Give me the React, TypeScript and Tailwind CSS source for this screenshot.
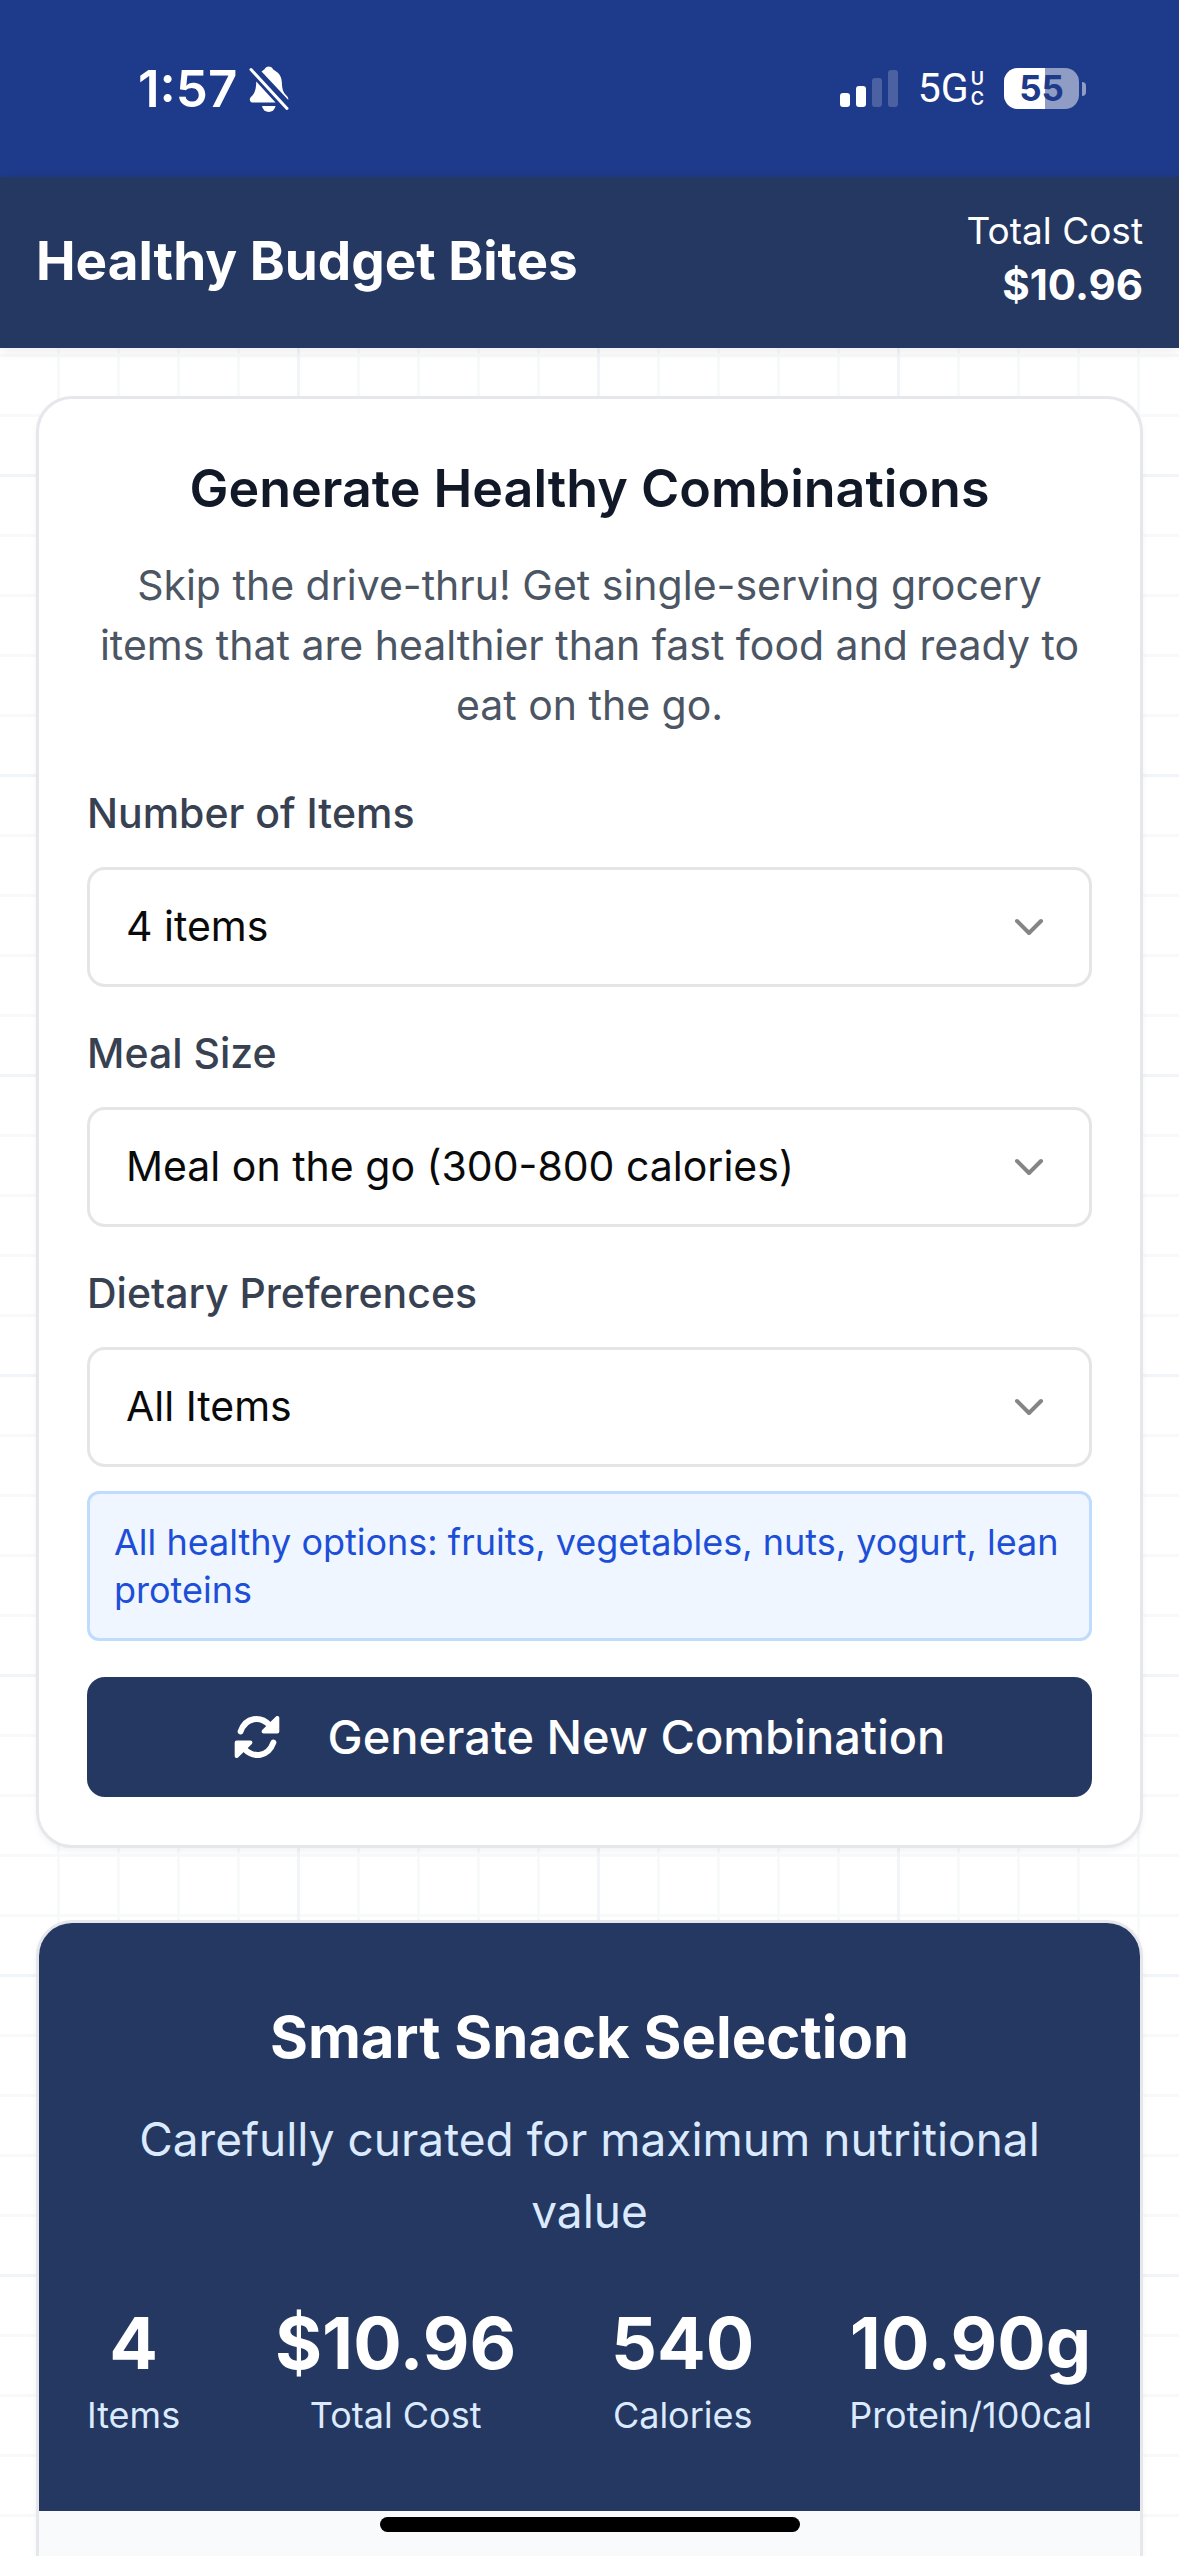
import { useState } from "react";
import { ChevronDown } from "lucide-react";

const FIELDS = [
  {
    id: "item-count",
    label: "Number of Items",
    initial: "4 items",
    options: ["2 items", "3 items", "4 items", "5 items"],
  },
  {
    id: "meal-size",
    label: "Meal Size",
    initial: "Meal on the go (300-800 calories)",
    options: ["Meal on the go (300-800 calories)"],
  },
  {
    id: "diet",
    label: "Dietary Preferences",
    initial: "All Items",
    options: ["All Items"],
  },
];

const STATS = [
  { value: "4", label: "Items" },
  { value: "$10.96", label: "Total Cost" },
  { value: "540", label: "Calories" },
  { value: "10.90g", label: "Protein/100cal" },
];

function BellOffIcon() {
  return (
    <svg viewBox="0 0 40 48" className="h-12 w-10" fill="currentColor" aria-hidden="true">
      <path d="M12.5 6.5C14.5 4.8 15.5 4.8 16 3.6a4.4 4.4 0 0 1 7.6 0c.5 1.3 1.3 1.5 2.8 2.5C30.5 8.5 32.8 12.5 32.9 18c.2 6 1.3 9.5 4.5 12.5 1.4 1.3 2 2.6 1.9 4.5z" />
      <path d="M7.3 16.5 26.5 37.5H3.3C.9 37.5-.2 34 1.9 32c3.8-3.6 5.1-7 5.4-15.5z" />
      <path d="M13 41h13.5a6.8 6.8 0 0 1-13.5 0z" />
      <path d="M2 4.5 38 43.5" stroke="currentColor" strokeWidth="3" strokeLinecap="round" />
    </svg>
  );
}

function RefreshIcon() {
  return (
    <svg viewBox="0 0 136 128" className="h-[42px] w-[46px]" stroke="currentColor" aria-hidden="true">
      <path d="M18 47C34 3 78-2 108 29" fill="none" strokeWidth="18" strokeLinecap="round" />
      <path d="M130 6v41H88z" fill="currentColor" strokeWidth="12" strokeLinejoin="round" />
      <path d="M118 81C102 125 58 130 28 99" fill="none" strokeWidth="18" strokeLinecap="round" />
      <path d="M6 122V81h42z" fill="currentColor" strokeWidth="12" strokeLinejoin="round" />
    </svg>
  );
}

function SignalBars() {
  return (
    <div className="flex items-end gap-[6px]" aria-hidden="true">
      <span className="h-[14px] w-[10px] rounded-[3px] bg-white" />
      <span className="h-[21px] w-[10px] rounded-[3px] bg-white" />
      <span className="h-[29px] w-[10px] rounded-[3px] bg-white/20" />
      <span className="h-[37px] w-[10px] rounded-[3px] bg-white/20" />
    </div>
  );
}

function Battery({ level }: { level: number }) {
  return (
    <div className="flex items-center gap-[3px]">
      <div className="relative flex h-[41px] w-[75px] items-center justify-center overflow-hidden rounded-[14px] bg-white/50">
        <span className="absolute inset-y-0 left-0 bg-white" style={{ width: `${level}%` }} />
        <span className="relative text-[35px] leading-none font-bold text-[#1e3a8a]">{level}</span>
      </div>
      <span className="h-[14px] w-1 rounded-r-full bg-white/50" />
    </div>
  );
}

function StatusBar() {
  return (
    <div className="flex h-[177px] items-center justify-between bg-[#1e3a8a] pr-[93px] pl-[138px] text-white">
      <div className="flex items-center gap-3">
        <span className="text-[51px] leading-[60px] font-semibold">1:57</span>
        <BellOffIcon />
      </div>
      <div className="flex items-center gap-5">
        <SignalBars />
        <div className="flex items-center gap-[2px]">
          <span className="font-[Roboto,sans-serif] text-[41px] leading-none">5G</span>
          <span className="flex flex-col text-[18px] leading-[20px] font-semibold">
            <span>U</span>
            <span>C</span>
          </span>
        </div>
        <Battery level={55} />
      </div>
    </div>
  );
}

function SelectField({
  id,
  label,
  initial,
  options,
}: {
  id: string;
  label: string;
  initial: string;
  options: string[];
}) {
  const [value, setValue] = useState(initial);

  return (
    <div className="flex flex-col gap-6">
      <label htmlFor={id} className="text-[41px] leading-[60px] font-medium text-[#374151]">
        {label}
      </label>
      <div className="relative">
        <select
          id={id}
          value={value}
          onChange={(e) => setValue(e.target.value)}
          className="h-[120px] w-full appearance-none rounded-[18px] border-[3px] border-neutral-200 bg-white px-9 text-[41px] text-neutral-950"
        >
          {options.map((option) => (
            <option key={option}>{option}</option>
          ))}
        </select>
        <ChevronDown className="pointer-events-none absolute top-9 right-[39px] size-12 text-[#858585]" />
      </div>
    </div>
  );
}

export default function App() {
  return (
    <div className="min-h-screen bg-white font-[Inter,sans-serif]">
      <StatusBar />
      <div className="bg-[repeating-linear-gradient(to_right,transparent_0_297px,#f1f5f9_297px_300px),repeating-linear-gradient(to_bottom,transparent_0_297px,#f1f5f9_297px_300px),repeating-linear-gradient(to_right,transparent_0_57px,#f8f9fb_57px_60px),repeating-linear-gradient(to_bottom,transparent_0_57px,#f8f9fb_57px_60px)]">
        <header className="flex items-center justify-between bg-[#243861] px-9 pt-[30px] pb-[33px] text-white shadow-[0_3px_12px_rgba(0,0,0,0.08)]">
          <h1 className="text-[53px] leading-[84px] font-bold">Healthy Budget Bites</h1>
          <div className="flex flex-col text-right">
            <span className="text-[37px] leading-[48px]">Total Cost</span>
            <span className="text-[42px] leading-[60px] font-bold">$10.96</span>
          </div>
        </header>

        <main className="flex flex-col gap-[72px] px-9 pt-12">
          <section className="flex flex-col gap-9 rounded-[36px] border-[3px] border-[#e5e7eb] bg-white p-12 shadow-[0_3px_6px_rgba(0,0,0,0.05)]">
            <div className="mb-3 flex flex-col gap-6 text-center">
              <h2 className="text-[52px] leading-[84px] font-semibold text-[#111827]">
                Generate Healthy Combinations
              </h2>
              <p className="text-[41px] leading-[60px] text-[#4b5563]">
                Skip the drive-thru! Get single-serving grocery items that are healthier than fast
                food and ready to eat on the go.
              </p>
            </div>
            {FIELDS.map((field) => (
              <SelectField key={field.id} {...field} />
            ))}
            <p className="-mt-3 rounded-xl border-[3px] border-[#bfdbfe] bg-[#eff6ff] p-6 text-[36px] leading-[48px] text-[#1d4ed8]">
              All healthy options: fruits, vegetables, nuts, yogurt, lean proteins
            </p>
            <button className="flex h-[120px] items-center justify-center gap-12 rounded-[18px] bg-[#243861] text-[47px] font-medium text-white">
              <RefreshIcon />
              Generate New Combination
            </button>
          </section>

          <section className="overflow-hidden rounded-t-[36px] border-[3px] border-b-0 border-[#e5e7eb] bg-[#f9fafb] shadow-[0_3px_6px_rgba(0,0,0,0.05)]">
            <div className="flex flex-col bg-[#243861] px-12 py-[72px] text-center text-white">
              <h2 className="text-[58px] leading-[84px] font-bold">Smart Snack Selection</h2>
              <p className="mt-6 text-[46px] leading-[72px] text-[#dbeafe]">
                Carefully curated for maximum nutritional value
              </p>
              <dl className="mt-12 flex justify-between">
                {STATS.map((stat) => (
                  <div key={stat.label} className="flex flex-col-reverse">
                    <dt className="text-[36px] leading-[48px] text-[#dbeafe]">{stat.label}</dt>
                    <dd className="text-[72px] leading-[96px] font-bold">{stat.value}</dd>
                  </div>
                ))}
              </dl>
            </div>
            <div className="h-[45px]" />
          </section>
        </main>
      </div>
      <div className="fixed bottom-6 left-1/2 h-[15px] w-[420px] -translate-x-1/2 rounded-full bg-black" />
    </div>
  );
}
